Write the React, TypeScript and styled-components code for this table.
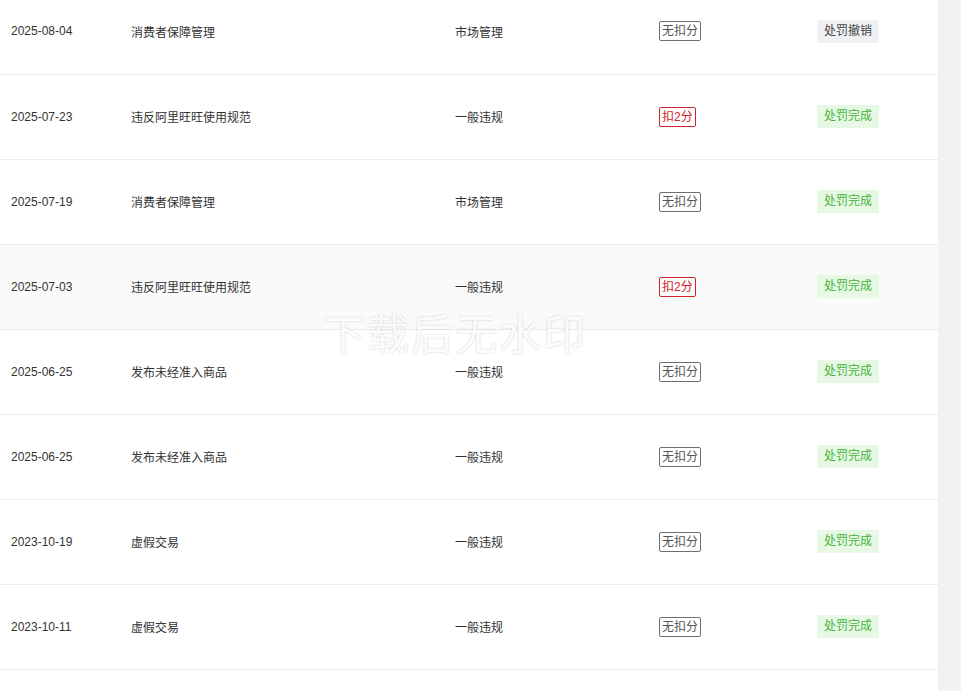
import React from "react";
import styled, { createGlobalStyle } from "styled-components";

const GlobalStyle = createGlobalStyle`
  html, body {
    margin: 0;
    padding: 0;
    background: #ffffff;
    overflow: hidden;
  }
  body {
    font-family: "Liberation Sans", "Noto Sans CJK SC", sans-serif;
    color: #333;
  }
`;

const Page = styled.div`
  display: flex;
  width: 961px;
  height: 691px;
  position: relative;
  overflow: hidden;
`;

const Main = styled.div`
  width: 938px;
  flex-shrink: 0;
  overflow: hidden;
`;

const Side = styled.div`
  flex: 1;
  background: #f2f2f2;
`;

const Table = styled.table`
  width: 100%;
  border-collapse: collapse;
  table-layout: fixed;
  margin-top: -11px;
`;

const Row = styled.tr<{ $hover?: boolean }>`
  height: 85px;
  background: ${({ $hover }) => ($hover ? "#fafafa" : "#fff")};
  border-bottom: 1px solid #ececec;
`;

const Cell = styled.td`
  padding: 0 0 0 11px;
  font-size: 12px;
  color: #333;
  vertical-align: middle;
  white-space: nowrap;
`;

const ScoreTag = styled.span<{ $red?: boolean }>`
  display: inline-block;
  height: 20px;
  line-height: 18px;
  box-sizing: border-box;
  padding: 0 2px;
  border: 1px solid ${({ $red }) => ($red ? "#d0242b" : "#6e6e6e")};
  border-radius: 2px;
  color: ${({ $red }) => ($red ? "#d0242b" : "#555")};
  font-size: 12px;
`;

const StatusTag = styled.span<{ $done?: boolean }>`
  display: inline-block;
  height: 23px;
  line-height: 23px;
  padding: 0 7px;
  border-radius: 2px;
  background: ${({ $done }) => ($done ? "#e7f8e5" : "#f0f1f4")};
  color: ${({ $done }) => ($done ? "#45b43a" : "#444")};
  font-size: 12px;
`;

const Watermark = styled.div`
  position: absolute;
  left: 323px;
  top: 311px;
  font-family: "Noto Sans CJK SC", sans-serif;
  font-size: 42px;
  line-height: 42px;
  letter-spacing: 2px;
  color: rgba(255, 255, 255, 0.95);
  text-shadow: 0 0 2px rgba(0, 0, 0, 0.22);
  pointer-events: none;
  white-space: nowrap;
`;

type Record = {
  date: string;
  reason: string;
  type: string;
  score: string;
  status: string;
};

const records: Record[] = [
  { date: "2025-08-04", reason: "消费者保障管理", type: "市场管理", score: "无扣分", status: "处罚撤销" },
  { date: "2025-07-23", reason: "违反阿里旺旺使用规范", type: "一般违规", score: "扣2分", status: "处罚完成" },
  { date: "2025-07-19", reason: "消费者保障管理", type: "市场管理", score: "无扣分", status: "处罚完成" },
  { date: "2025-07-03", reason: "违反阿里旺旺使用规范", type: "一般违规", score: "扣2分", status: "处罚完成" },
  { date: "2025-06-25", reason: "发布未经准入商品", type: "一般违规", score: "无扣分", status: "处罚完成" },
  { date: "2025-06-25", reason: "发布未经准入商品", type: "一般违规", score: "无扣分", status: "处罚完成" },
  { date: "2023-10-19", reason: "虚假交易", type: "一般违规", score: "无扣分", status: "处罚完成" },
  { date: "2023-10-11", reason: "虚假交易", type: "一般违规", score: "无扣分", status: "处罚完成" },
];

const App: React.FC = () => {
  return (
    <>
      <GlobalStyle />
      <Page>
        <Main>
          <Table>
            <colgroup>
              <col style={{ width: 120 }} />
              <col style={{ width: 324 }} />
              <col style={{ width: 204 }} />
              <col style={{ width: 158 }} />
              <col />
            </colgroup>
            <tbody>
              {records.map((r, i) => (
                <Row key={i} $hover={i === 3}>
                  <Cell>{r.date}</Cell>
                  <Cell>{r.reason}</Cell>
                  <Cell>{r.type}</Cell>
                  <Cell>
                    <ScoreTag $red={r.score !== "无扣分"}>{r.score}</ScoreTag>
                  </Cell>
                  <Cell>
                    <StatusTag $done={r.status === "处罚完成"}>{r.status}</StatusTag>
                  </Cell>
                </Row>
              ))}
            </tbody>
          </Table>
        </Main>
        <Side />
        <Watermark>下载后无水印</Watermark>
      </Page>
    </>
  );
};

export default App;
